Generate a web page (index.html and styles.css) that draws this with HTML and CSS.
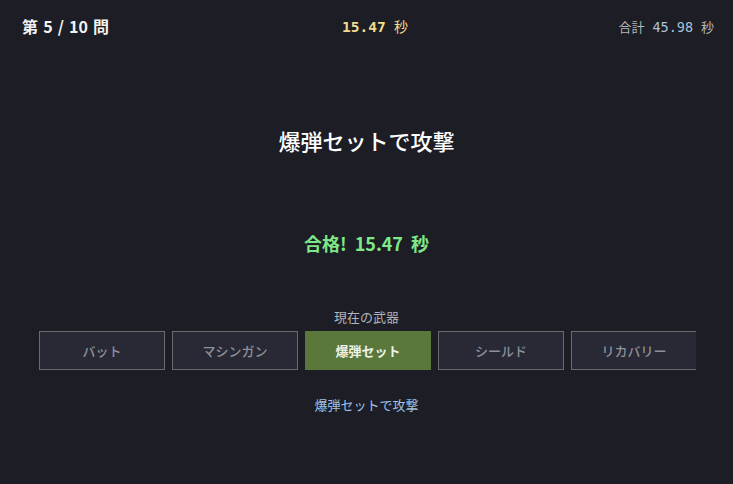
FILE: index.html
```html
<!DOCTYPE html>
<html lang="ja">
<head>
    <meta charset="UTF-8">
    <title>武器クイズ</title>
    <link rel="stylesheet" href="styles.css">
</head>
<body>
    <div class="topbar">
        <div class="progress">第 5 / 10 問</div>
        <div class="timer"><span class="mono">15.47</span> 秒</div>
        <div class="total">合計 <span class="mono total-num">45.98</span> 秒</div>
    </div>

    <div class="main">
        <div class="question">爆弾セットで攻撃</div>
        <div class="result">合格! 15.47 秒</div>

        <div class="weapon-label">現在の武器</div>
        <div class="weapons">
            <button class="weapon">バット</button>
            <button class="weapon">マシンガン</button>
            <button class="weapon active">爆弾セット</button>
            <button class="weapon">シールド</button>
            <button class="weapon">リカバリー</button>
        </div>

        <div class="hint">爆弾セットで攻撃</div>
    </div>
</body>
</html>
```

FILE: styles.css
```css
body {
    margin: 0;
    background-color: #1c1d25;
    color: #e6e6e6;
    font-family: "Noto Sans CJK JP", "Noto Sans", sans-serif;
}
.mono {
    font-family: "DejaVu Sans Mono", monospace;
}
.topbar {
    display: grid;
    grid-template-columns: 1fr auto 1fr;
    align-items: center;
    padding: 14px 19px 0 22px;
    height: 20px;
}
.progress {
    font-size: 16px;
    font-weight: bold;
    word-spacing: 1.5px;
    color: #f2f2f2;
}
.timer {
    padding-left: 14px;
    font-size: 14px;
    word-spacing: 5px;
    color: #f0dc8c;
}
.timer .mono {
    font-size: 14.5px;
    font-weight: bold;
}
.total {
    text-align: right;
    font-size: 13px;
    word-spacing: 5px;
    color: #b4b7bd;
}
.total-num {
    font-size: 13.5px;
    color: #a9c3dc;
}
.main {
    text-align: center;
}
.question {
    margin-top: 91px;
    font-size: 22px;
    line-height: 30px;
    font-weight: 500;
    color: #ffffff;
}
.result {
    margin-top: 75px;
    font-size: 18px;
    line-height: 26px;
    font-weight: bold;
    word-spacing: 4px;
    color: #7ee787;
}
.weapon-label {
    margin-top: 52px;
    font-size: 13px;
    line-height: 18px;
    color: #b0b4bb;
}
.weapons {
    display: flex;
    gap: 7px;
    width: 657px;
    margin: 5px 0 0 39px;
    overflow: hidden;
}
.weapon {
    flex: 0 0 126px;
    height: 39px;
    background-color: #282934;
    border: 1px solid #6b6b6b;
    color: #8c919a;
    font-family: inherit;
    font-size: 13px;
    font-weight: 500;
}
.weapon.active {
    background-color: #5a783c;
    border-color: #5a783c;
    color: #eef2e8;
    font-weight: bold;
}
.hint {
    margin-top: 26px;
    font-size: 13px;
    line-height: 18px;
    color: #9fc4e6;
}
```
